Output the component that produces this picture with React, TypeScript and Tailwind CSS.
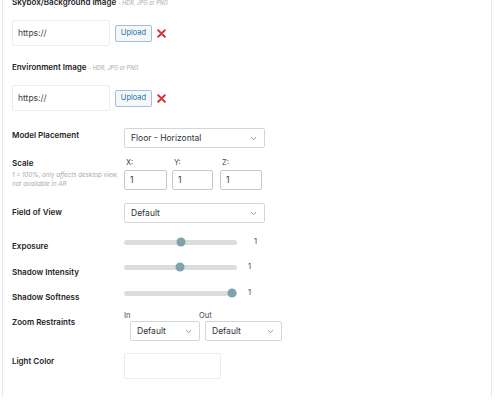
import React from 'react';

const font = { fontFamily: 'Inter, "Liberation Sans", sans-serif' };

function Chevron() {
  return (
    <svg width="7" height="5" viewBox="0 0 7 5" className="shrink-0">
      <path d="M1 1.2 L3.5 3.6 L6 1.2" fill="none" stroke="#8c8f94" strokeWidth="0.9" />
    </svg>
  );
}

function Select({ value, className }: { value: string; className: string }) {
  return (
    <div
      className={`flex items-center justify-between rounded-[2px] border border-[#d6d6d6] bg-white pl-[6px] pr-[7px] text-[8.5px] text-[#2c3338] ${className}`}
    >
      <span>{value}</span>
      <Chevron />
    </div>
  );
}

function RemoveIcon() {
  return (
    <svg width="9" height="9" viewBox="0 0 9 9" className="ml-[5px]">
      <path d="M1.2 1.2 L7.8 7.8 M7.8 1.2 L1.2 7.8" stroke="#d63638" strokeWidth="2" strokeLinecap="round" />
    </svg>
  );
}

function UrlField() {
  return (
    <div className="flex items-center">
      <div className="flex h-[26px] w-[98px] items-center rounded-[2px] border border-[#ececec] pl-[5px] text-[8.5px] text-[#3c434a]">
        https://
      </div>
      <div className="ml-[5px] flex h-[17px] w-[37px] items-center justify-center rounded-[2px] border border-[#9fbfdc] bg-[#f6f7f7] text-[7.5px] text-[#2271b1]">
        Upload
      </div>
      <RemoveIcon />
    </div>
  );
}

function Label({ children, className = '' }: { children: React.ReactNode; className?: string }) {
  return (
    <div className={`w-[112px] shrink-0 text-[8px] font-semibold leading-[10px] text-[#1d2327] ${className}`}>
      {children}
    </div>
  );
}

function Slider({ pos, valueGap }: { pos: number; valueGap: number }) {
  return (
    <div className="flex h-[10px] items-center self-start">
      <div className="relative h-[5px] w-[113px] rounded-full bg-[#dcdcde]">
        <div
          className="absolute top-1/2 h-[9px] w-[9px] -translate-x-1/2 -translate-y-1/2 rounded-full bg-[#7fa3ad]"
          style={{ left: `${pos}px` }}
        />
      </div>
      <span className="text-[7.5px] text-[#3c434a]" style={{ marginLeft: `${valueGap}px` }}>
        1
      </span>
    </div>
  );
}

export default function App() {
  return (
    <div className="h-[400px] w-[495px] overflow-hidden bg-white" style={font}>
      <div className="ml-[2px] h-full w-[490px] border-x border-[#e8e8e8] pl-[9px]">
        <div className="-mt-[3px] text-[8px] font-semibold leading-[10px] text-[#1d2327]">
          Skybox/Background Image{' '}
          <span className="text-[5.5px] font-normal italic text-[#a7aaad]">- HDR, JPG or PNG</span>
        </div>
        <div className="mt-[12px]">
          <UrlField />
        </div>

        <div className="mt-[16px] text-[8px] font-semibold leading-[10px] text-[#1d2327]">
          Environment Image{' '}
          <span className="text-[5.5px] font-normal italic text-[#a7aaad]">- HDR, JPG or PNG</span>
        </div>
        <div className="mt-[12px]">
          <UrlField />
        </div>

        <div className="mt-[17px] flex">
          <Label className="pt-[2px]">Model Placement</Label>
          <Select value="Floor - Horizontal" className="h-[20px] w-[141px]" />
        </div>

        <div className="mt-[10px] flex">
          <div className="w-[112px] shrink-0">
            <div className="text-[8px] font-semibold leading-[10px] text-[#1d2327]">Scale</div>
            <div className="mt-[2px] text-[6.2px] italic leading-[9px] text-[#a7aaad]">
              1 = 100%, only affects desktop view,
              <br />
              not available in AR
            </div>
          </div>
          <div className="flex gap-[5px]">
            {[
              ['X:', 'w-[43px]'],
              ['Y:', 'w-[41px]'],
              ['Z:', 'w-[42px]'],
            ].map(([l, w], i) => (
              <div key={l} className={i === 2 ? 'ml-[2px]' : ''}>
                <div className="pl-[2px] text-[7.5px] leading-[10px] text-[#3c434a]">{l}</div>
                <div
                  className={`mt-[2px] flex h-[20px] items-center rounded-[2px] border border-[#c9c9c9] pl-[5px] text-[8.5px] text-[#2c3338] ${w}`}
                >
                  1
                </div>
              </div>
            ))}
          </div>
        </div>

        <div className="mt-[13px] flex">
          <Label className="pt-[4px]">Field of View</Label>
          <Select value="Default" className="h-[20px] w-[141px]" />
        </div>

        <div className="mt-[14px] flex h-[14px]">
          <Label className="pt-[4px]">Exposure</Label>
          <Slider pos={57} valueGap={17} />
        </div>

        <div className="mt-[11px] flex h-[14px]">
          <Label className="pt-[5px]">Shadow Intensity</Label>
          <Slider pos={56} valueGap={11} />
        </div>

        <div className="mt-[12px] flex h-[14px]">
          <Label className="pt-[4px]">Shadow Softness</Label>
          <Slider pos={108} valueGap={11} />
        </div>

        <div className="mt-[9px] flex">
          <Label className="pt-[6px]">Zoom Restraints</Label>
          <div>
            <div className="flex text-[7.5px] leading-[10px] text-[#3c434a]">
              <span className="w-[75px]">In</span>
              <span>Out</span>
            </div>
            <div className="ml-[6px] flex gap-[5px]">
              <Select value="Default" className="h-[20px] w-[70px]" />
              <Select value="Default" className="h-[20px] w-[77px]" />
            </div>
          </div>
        </div>

        <div className="mt-[12px] flex">
          <Label className="pt-[3px]">Light Color</Label>
          <div className="h-[26px] w-[97px] rounded-[2px] border border-[#ececec]" />
        </div>
      </div>
    </div>
  );
}
